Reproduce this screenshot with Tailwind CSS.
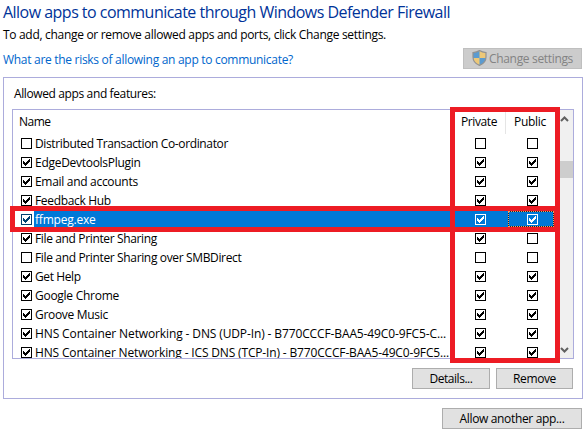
<!DOCTYPE html>
<html lang="en">
<head>
<meta charset="utf-8">
<title>Allowed apps</title>
<script src="https://cdn.jsdelivr.net/npm/@tailwindcss/browser@4"></script>
</head>
<body class="bg-white">
<main class="relative w-[586px] h-[433px] overflow-hidden bg-white pt-px pl-[3px] font-['Open_Sans','Noto_Sans',sans-serif] text-[12px] leading-[19px] text-black whitespace-nowrap">
  <h1 class="h-[24px] text-[16px] leading-[22px] tracking-[-0.524px] text-[#003399]">Allow apps to communicate through Windows Defender Firewall</h1>
  <p class="h-[23px] tracking-[-0.31px]">To add, change or remove allowed apps and ports, click Change settings.</p>
  <div class="flex h-[29px] w-[579px] justify-between">
    <a class="pt-[2px] tracking-[-0.295px] text-[#0066cc]">What are the risks of allowing an app to communicate?</a>
    <button class="flex h-[21px] w-[119px] border border-[#bfbfbf] bg-[#cccccc] pl-[8px] text-[#838383]">
      <svg class="mt-px h-[16px] w-[15px]" viewBox="0 0 15 16">
        <path d="M7.5 0.5C5.5 2 3.3 2.5 1 2.6V7C1 11 3.5 13.8 7.5 15.5C11.5 13.8 14 11 14 7V2.6C11.7 2.5 9.5 2 7.5 0.5Z" fill="#edc878"/>
        <path d="M7.5 0.5C5.5 2 3.3 2.5 1 2.6V8H7.5ZM7.5 8H14C13.6 11.5 11.2 14 7.5 15.5Z" fill="#5b9bd0"/>
        <path d="M7.5 0.6C5.5 2 3.3 2.5 1 2.6V7C1 11 3.5 13.8 7.5 15.4C11.5 13.8 14 11 14 7V2.6C11.7 2.5 9.5 2 7.5 0.6Z" fill="none" stroke="#929292" stroke-width="1.2"/>
      </svg>
      <span class="ml-[2px] tracking-[-0.33px]">Change settings</span>
    </button>
  </div>

  <section class="h-[322px] w-[580px] border border-[#acacdc] pl-[8px] pt-[6px]">
    <h2 class="h-[25px] pl-[2px] tracking-[-0.38px]">Allowed apps and features:</h2>
    <div class="flex h-[250px] w-[562px] overflow-hidden border border-[#acacdc]">
      <div class="w-[543px] shrink-0">
        <div class="flex h-[24px] pt-[2px]">
          <span class="w-[442px] pl-[6px] tracking-[-0.5px]">Name</span>
          <span class="w-[50px] pl-[6px] tracking-[-0.406px]">Private</span>
          <span class="-mt-[2px] h-[24px] w-px bg-[#e5e5e5]"></span>
          <span class="pl-[8px] tracking-[-0.289px]">Public</span>
        </div>
        <div id="rows"></div>
      </div>
      <div class="flex h-[248px] w-[17px] shrink-0 flex-col bg-[#f0f0f0]">
        <svg class="h-[17px] w-[17px]" viewBox="0 0 17 17"><path d="M5 11L8.5 7.5L12 11" fill="none" stroke="#606060" stroke-width="2"/></svg>
        <div class="mt-[34px] h-[17px] bg-[#cdcdcd]"></div>
        <svg class="mt-auto h-[17px] w-[17px]" viewBox="0 0 17 17"><path d="M5 7L8.5 10.5L12 7" fill="none" stroke="#606060" stroke-width="2"/></svg>
      </div>
    </div>
    <div class="mt-[9px] flex gap-[6px] pl-[400px]">
      <button class="h-[21px] w-[78px] border border-[#adadad] bg-[#e1e1e1] tracking-[-0.463px]">Details...</button>
      <button class="h-[21px] w-[77px] border border-[#adadad] bg-[#e1e1e1] tracking-[-0.37px]">Remove</button>
    </div>
  </section>
  <button class="ml-[439px] mt-[9px] block h-[21px] w-[140px] border border-[#adadad] bg-[#e1e1e1] tracking-[-0.337px]">Allow another app...</button>

  <div class="absolute left-[10px] top-[206px] h-[26px] w-[549px] border-[5px] border-[#ed1c24]"></div>
  <div class="absolute left-[450px] top-[107px] h-[256px] w-[110px] border-[5px] border-[#ed1c24]"></div>
</main>
<script>
// name, letter spacing, enabled, private, public
const apps = [
  ["Distributed Transaction Co-ordinator", -0.364, 0, 0, 0],
  ["EdgeDevtoolsPlugin", -0.28, 1, 1, 1],
  ["Email and accounts", -0.3, 1, 1, 1],
  ["Feedback Hub", -0.33, 1, 1, 1],
  ["ffmpeg.exe", -0.22, 1, 1, 1],
  ["File and Printer Sharing", -0.36, 1, 1, 0],
  ["File and Printer Sharing over SMBDirect", -0.355, 0, 0, 0],
  ["Get Help", -0.4, 1, 1, 1],
  ["Google Chrome", -0.27, 1, 1, 1],
  ["Groove Music", -0.3, 1, 1, 1],
  ["HNS Container Networking - DNS (UDP-In) - B770CCCF-BAA5-49C0-9FC5-C...", -0.122, 1, 1, 1],
  ["HNS Container Networking - ICS DNS (TCP-In) - B770CCCF-BAA5-49C0-9FC5...", -0.159, 1, 1, 1]
];
const box = (on, cls) => `<svg class="h-[11px] w-[11px] shrink-0 ${cls}" viewBox="0 0 11 11" shape-rendering="crispEdges"><path d="M.5 .5H10.5V10.5H.5Z" fill="none" stroke="currentColor"/>${on ? '<path d="M2 4h1v1h1v1h1v-1h1v-1h1v-1h1v-1h1v3h-1v1h-1v1h-1v1h-1v1h-1v-1h-1v-1h-1z" fill="currentColor"/>' : ''}</svg>`;
document.getElementById('rows').innerHTML = apps.map(([name, ls, on, priv, pub], i) => {
  const sel = i === 4;
  const publicCell = sel
    ? `<div class="ml-[22px] mt-px h-[16px] w-[46px] border border-dotted border-[#ff9f50] bg-[#00284a]"><div class="flex h-[14px] bg-[#0078d7] pl-[18px] pt-[2px]">${box(pub, '')}</div></div>`
    : `<div class="ml-[41px] pt-[4px]">${box(pub, '')}</div>`;
  return `<div class="flex h-[19px] pl-[8px]">${box(on, sel ? 'mt-[4px] text-[#00406f]' : 'mt-[4px]')}
    <div class="ml-[2px] flex h-[19px] w-[522px] ${sel ? 'bg-[#0078d7] text-white' : ''}">
      <span class="w-[441px] shrink-0 pl-[1px]" style="letter-spacing:${ls}px">${name}</span>
      ${box(priv, 'mt-[4px]')}
      ${publicCell}
    </div></div>`;
}).join('');
</script>
</body>
</html>
